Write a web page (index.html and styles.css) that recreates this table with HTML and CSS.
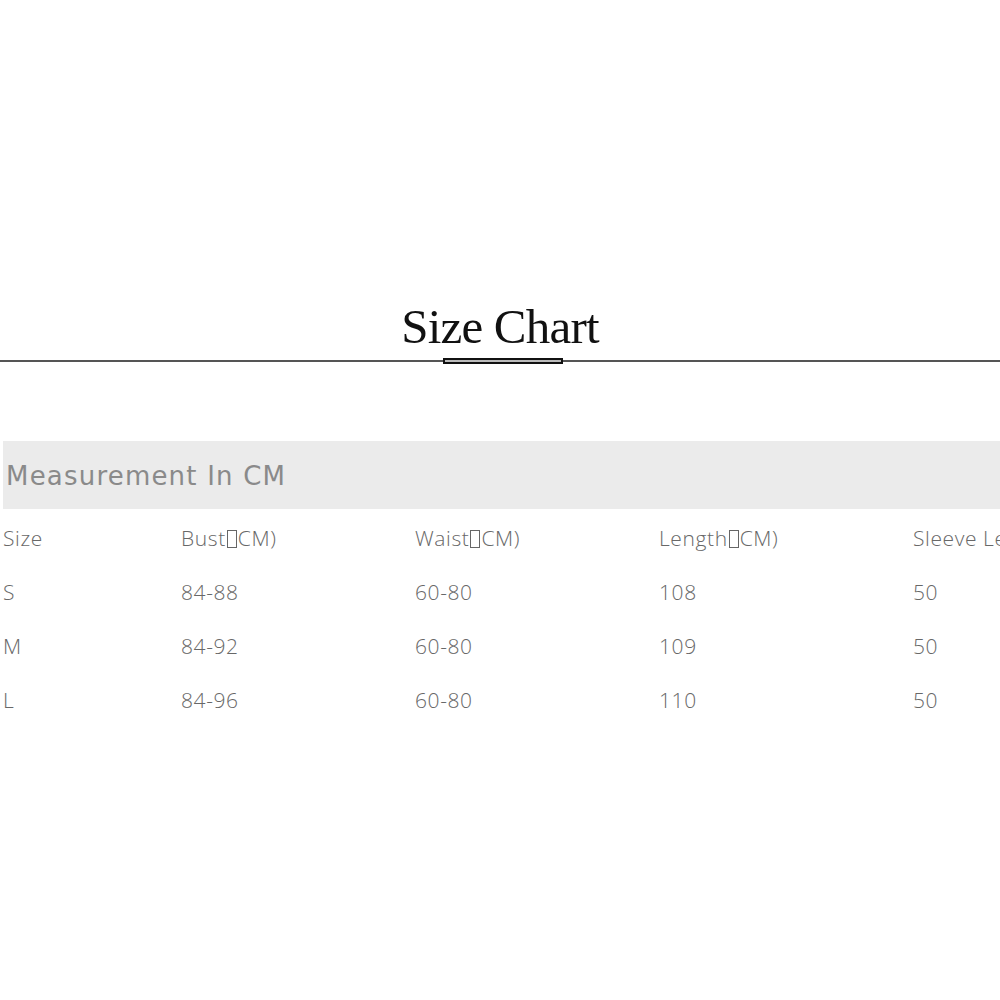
FILE: index.html
```html
<!DOCTYPE html>
<html>
<head>
<meta charset="utf-8">
<link rel="stylesheet" href="styles.css">
</head>
<body>
<div class="page">
  <div class="title-wrap">
    <h1 class="title">Size Chart</h1>
    <div class="rule"><span class="underline"></span></div>
  </div>
  <div class="band">Measurement In CM</div>
  <div class="table">
    <div class="row">
      <div class="c c1">Size</div>
      <div class="c c2">Bust<span class="tofu"></span>CM)</div>
      <div class="c c3">Waist<span class="tofu"></span>CM)</div>
      <div class="c c4">Length<span class="tofu"></span>CM)</div>
      <div class="c c5">Sleeve Length</div>
    </div>
    <div class="row">
      <div class="c c1">S</div>
      <div class="c c2">84-88</div>
      <div class="c c3">60-80</div>
      <div class="c c4">108</div>
      <div class="c c5">50</div>
    </div>
    <div class="row">
      <div class="c c1">M</div>
      <div class="c c2">84-92</div>
      <div class="c c3">60-80</div>
      <div class="c c4">109</div>
      <div class="c c5">50</div>
    </div>
    <div class="row">
      <div class="c c1">L</div>
      <div class="c c2">84-96</div>
      <div class="c c3">60-80</div>
      <div class="c c4">110</div>
      <div class="c c5">50</div>
    </div>
  </div>
</div>
</body>
</html>
```

FILE: styles.css
```css
html, body {
  margin: 0;
  padding: 0;
  background: #fff;
  width: 1000px;
  height: 1000px;
  overflow: hidden;
}
.page {
  padding-top: 296px;
}
.title-wrap {
  display: flex;
  flex-direction: column;
  align-items: center;
}
.title {
  margin: 0;
  font-family: "Liberation Serif", serif;
  font-weight: normal;
  font-size: 49px;
  line-height: 62px;
  color: #111;
  letter-spacing: -0.8px;
}
.rule {
  width: 1000px;
  height: 2px;
  background: #555;
  margin-top: 2px;
  display: flex;
  justify-content: center;
  align-items: center;
}
.underline {
  display: block;
  margin-left: 6px;
  width: 116px;
  height: 2px;
  border: 2px solid #111;
  background: #bbb;
}
.band {
  margin-top: 79px;
  margin-left: 3px;
  height: 68px;
  background: #ebebeb;
  display: flex;
  align-items: center;
  padding-left: 3px;
  padding-top: 2px;
  box-sizing: border-box;
  font-family: "DejaVu Sans", sans-serif;
  font-size: 26px;
  color: #8a8a8a;
  letter-spacing: 1.2px;
}
.table {
  padding-top: 2px;
}
.row {
  display: grid;
  grid-template-columns: 178px 234px 244px 254px 90px;
  height: 54px;
  align-items: center;
  font-family: "Open Sans", sans-serif;
  font-weight: 300;
  font-size: 21px;
  color: #686868;
  white-space: nowrap;
  letter-spacing: 0.6px;
}
.c { padding-left: 3px; }
.c5 { overflow: hidden; }
.tofu {
  display: inline-block;
  width: 8px;
  height: 16px;
  border: 1px solid #666;
  margin: 0 1px;
  vertical-align: -2px;
}
```
